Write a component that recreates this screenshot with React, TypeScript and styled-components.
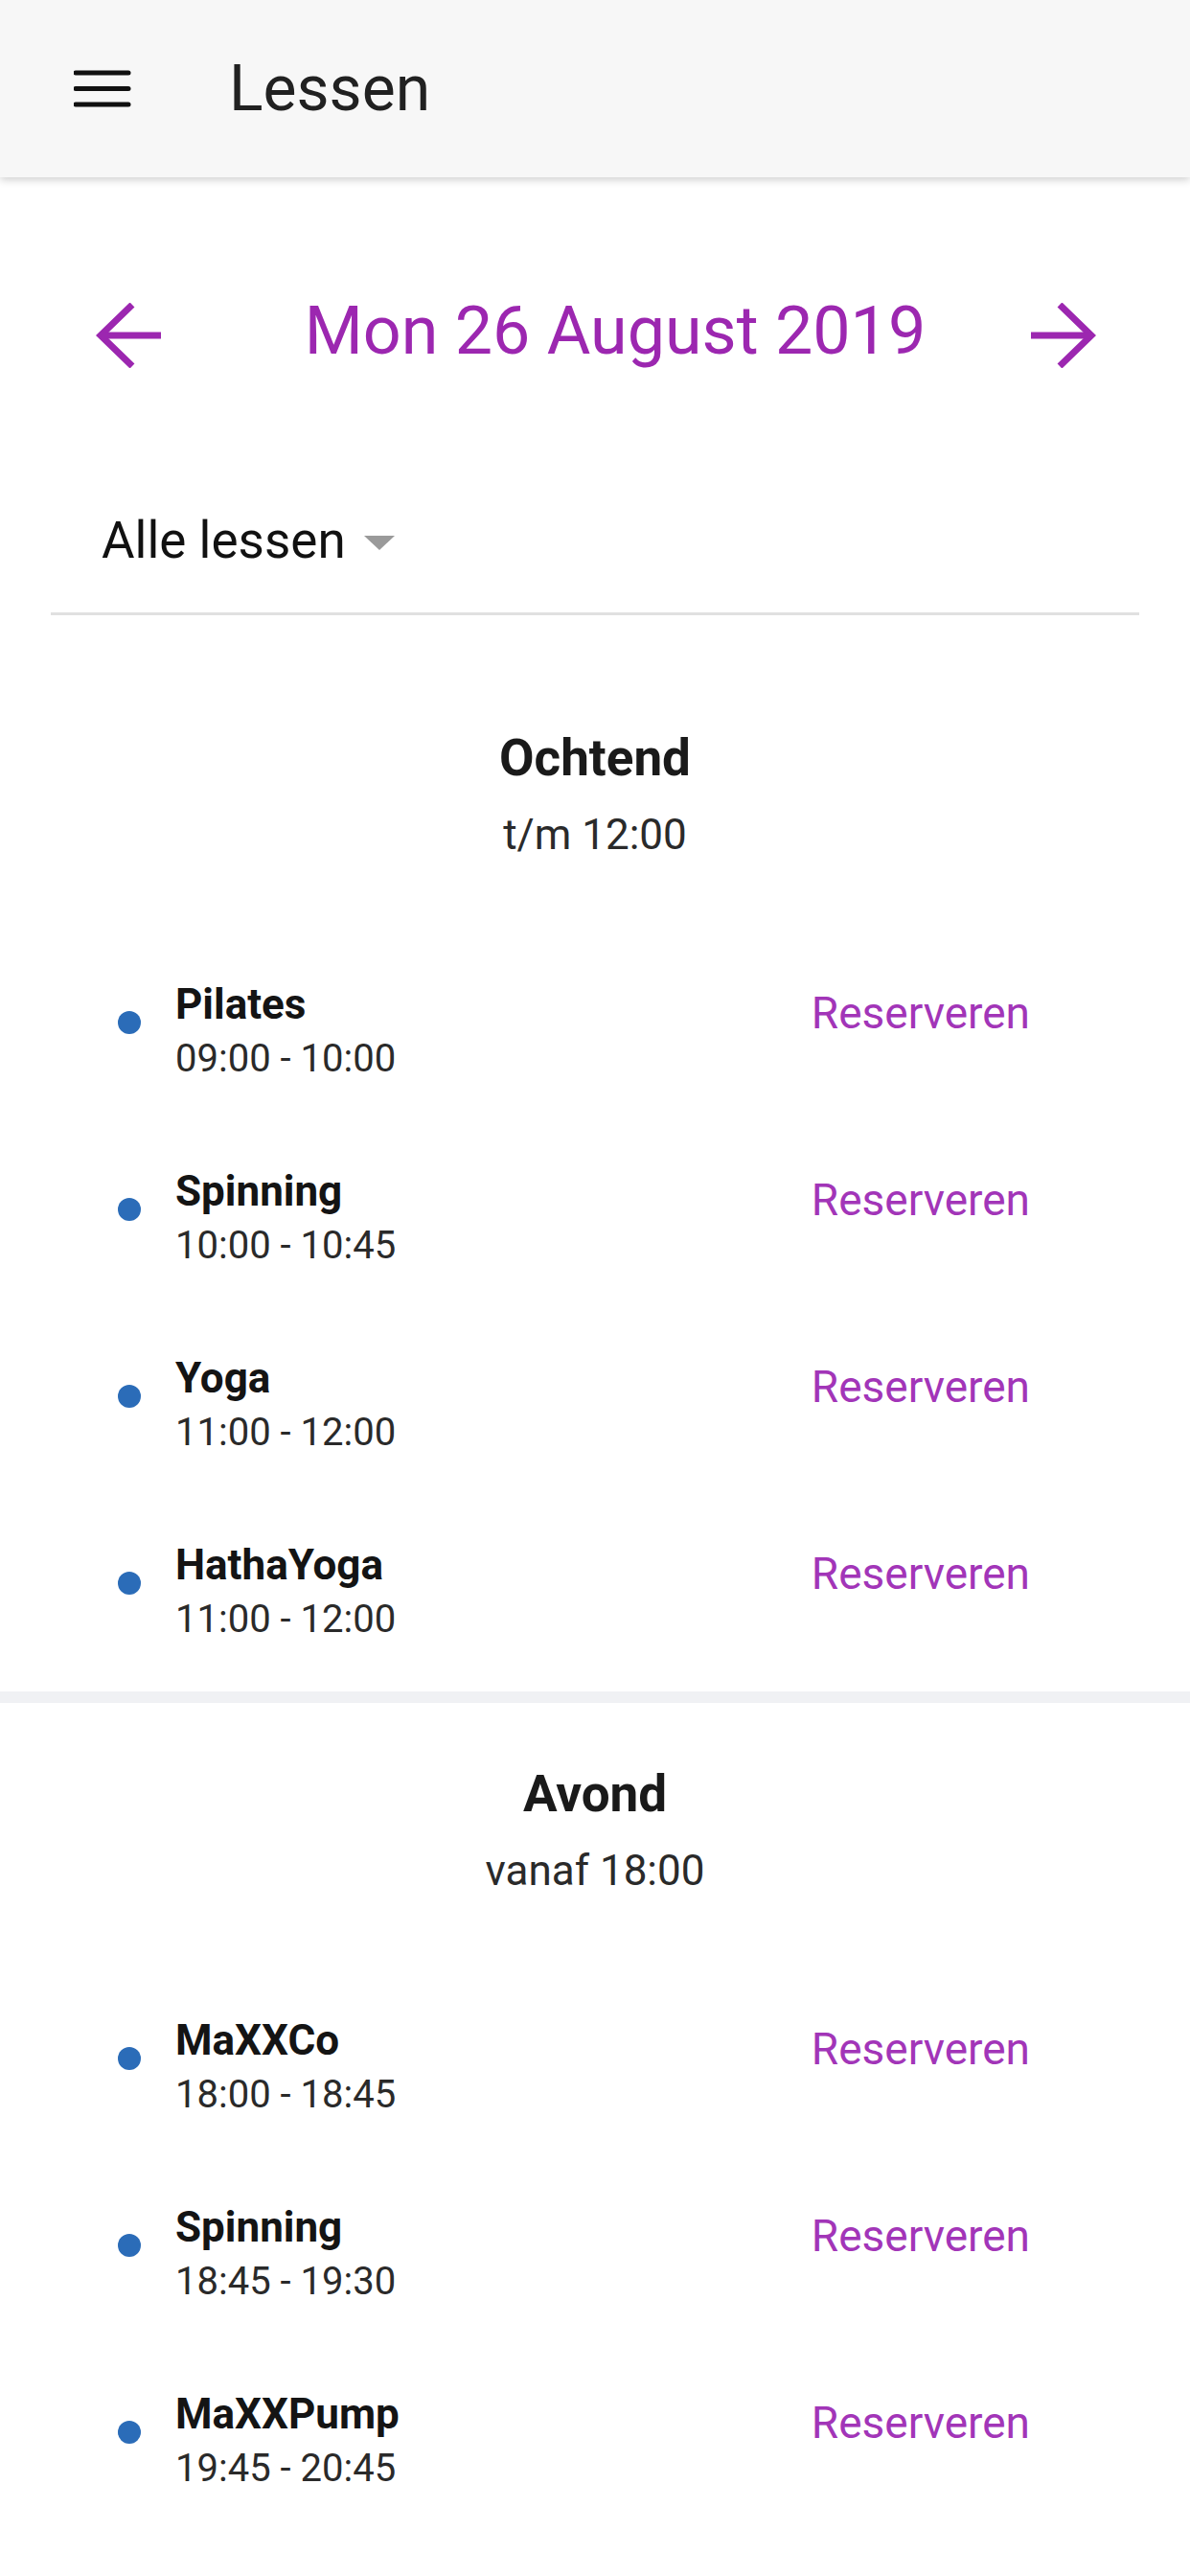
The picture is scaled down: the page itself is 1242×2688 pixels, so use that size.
import React from 'react'
import styled, { createGlobalStyle } from 'styled-components'

const GlobalStyle = createGlobalStyle`
  html, body {
    margin: 0;
    padding: 0;
    background: #ffffff;
    font-family: Roboto, "Noto Sans", "Liberation Sans", sans-serif;
    color: #1c1c1c;
  }
  * {
    box-sizing: border-box;
  }
`

const Page = styled.div`
  min-height: 100vh;
  background: #fff;
`

const AppBar = styled.header`
  display: flex;
  align-items: center;
  height: 185px;
  padding-left: 77px;
  background: #f7f7f7;
  box-shadow: 0 3px 8px rgba(0, 0, 0, 0.18);
  position: relative;
  z-index: 1;
`

const MenuButton = styled.button`
  display: flex;
  align-items: center;
  padding: 0;
  border: none;
  background: transparent;
  cursor: pointer;
`

const Title = styled.h1`
  margin: 0 0 0 102px;
  font-size: 66px;
  font-weight: 400;
  color: #212121;
  line-height: 1;
`

const DateNav = styled.div`
  display: flex;
  align-items: center;
  height: 100px;
  margin-top: 110px;
  padding: 0 98px 0 100px;
`

const ArrowButton = styled.button`
  display: flex;
  align-items: center;
  justify-content: center;
  width: 70px;
  height: 70px;
  padding: 0;
  border: none;
  background: transparent;
  cursor: pointer;
  margin-top: 10px;
`

const DateLabel = styled.div`
  flex: 1;
  text-align: center;
  padding-left: 40px;
  font-size: 70px;
  line-height: 100px;
  color: #9c27b0;
`

const FilterBar = styled.div`
  margin: 139px 53px 0;
  padding: 0 53px 45px;
  border-bottom: 3px solid #e0e0e0;
  display: flex;
  align-items: center;
`

const FilterText = styled.span`
  font-size: 53px;
  line-height: 60px;
  color: #111;
`

const Caret = styled.span`
  display: inline-block;
  margin-left: 19px;
  margin-top: 4px;
  width: 0;
  height: 0;
  border-left: 16px solid transparent;
  border-right: 16px solid transparent;
  border-top: 15px solid #9a9a9a;
`

const Section = styled.section<{ $top: number }>`
  padding-top: ${p => p.$top}px;
  padding-bottom: 7px;
`

const SectionHead = styled.div`
  text-align: center;
  margin-bottom: 81px;
`

const SectionTitle = styled.div`
  font-size: 53px;
  font-weight: 700;
  line-height: 60px;
  color: #1a1a1a;
`

const SectionSub = styled.div`
  margin-top: 24px;
  font-size: 44px;
  line-height: 52px;
  color: #2a2a2a;
`

const LessonRow = styled.div`
  display: flex;
  align-items: center;
  padding: 45px 167px 45px 123px;
`

const Dot = styled.span`
  flex: none;
  width: 24px;
  height: 24px;
  border-radius: 50%;
  background: #2b6cb8;
  margin-top: -18px;
`

const LessonInfo = styled.div`
  margin-left: 36px;
  display: flex;
  flex-direction: column;
`

const LessonName = styled.div`
  font-size: 44px;
  font-weight: 700;
  line-height: 50px;
  color: #141414;
`

const LessonTime = styled.div`
  margin-top: 9px;
  font-size: 40px;
  line-height: 46px;
  color: #2a2a2a;
`

const ReserveLink = styled.button`
  margin-left: auto;
  align-self: flex-start;
  margin-top: 9px;
  padding: 0;
  border: none;
  background: transparent;
  font-family: inherit;
  font-size: 46px;
  line-height: 50px;
  color: #a235b8;
  cursor: pointer;
`

const Band = styled.div`
  height: 12px;
  background: #f0f1f4;
`

const MenuIcon = () => (
  <svg width="60" height="42" viewBox="0 0 60 42">
    <g stroke="#111" strokeWidth="5" strokeLinecap="round">
      <line x1="2" y1="4" x2="57" y2="4" />
      <line x1="2" y1="20.5" x2="57" y2="20.5" />
      <line x1="2" y1="37" x2="57" y2="37" />
    </g>
  </svg>
)

const Arrow = ({ dir }: { dir: 'left' | 'right' }) => (
  <svg
    width="70"
    height="68"
    viewBox="0 0 70 68"
    style={dir === 'right' ? { transform: 'scaleX(-1)' } : undefined}
  >
    <g stroke="#9c27b0" strokeWidth="7" fill="none">
      <path d="M38 2 L5 34 L38 66" />
      <path d="M5 34 H68" />
    </g>
  </svg>
)

type Lesson = { name: string; time: string }

const morning: Lesson[] = [
  { name: 'Pilates', time: '09:00 - 10:00' },
  { name: 'Spinning', time: '10:00 - 10:45' },
  { name: 'Yoga', time: '11:00 - 12:00' },
  { name: 'HathaYoga', time: '11:00 - 12:00' },
]

const evening: Lesson[] = [
  { name: 'MaXXCo', time: '18:00 - 18:45' },
  { name: 'Spinning', time: '18:45 - 19:30' },
  { name: 'MaXXPump', time: '19:45 - 20:45' },
]

function LessonList({ items }: { items: Lesson[] }) {
  return (
    <div>
      {items.map((l, i) => (
        <LessonRow key={i}>
          <Dot />
          <LessonInfo>
            <LessonName>{l.name}</LessonName>
            <LessonTime>{l.time}</LessonTime>
          </LessonInfo>
          <ReserveLink>Reserveren</ReserveLink>
        </LessonRow>
      ))}
    </div>
  )
}

export default function App() {
  return (
    <Page>
      <GlobalStyle />
      <AppBar>
        <MenuButton aria-label="menu">
          <MenuIcon />
        </MenuButton>
        <Title>Lessen</Title>
      </AppBar>

      <DateNav>
        <ArrowButton aria-label="vorige dag">
          <Arrow dir="left" />
        </ArrowButton>
        <DateLabel>Mon 26 August 2019</DateLabel>
        <ArrowButton aria-label="volgende dag">
          <Arrow dir="right" />
        </ArrowButton>
      </DateNav>

      <FilterBar>
        <FilterText>Alle lessen</FilterText>
        <Caret />
      </FilterBar>

      <Section $top={119}>
        <SectionHead>
          <SectionTitle>Ochtend</SectionTitle>
          <SectionSub>t/m 12:00</SectionSub>
        </SectionHead>
        <LessonList items={morning} />
      </Section>

      <Band />

      <Section $top={65}>
        <SectionHead>
          <SectionTitle>Avond</SectionTitle>
          <SectionSub>vanaf 18:00</SectionSub>
        </SectionHead>
        <LessonList items={evening} />
      </Section>
    </Page>
  )
}
